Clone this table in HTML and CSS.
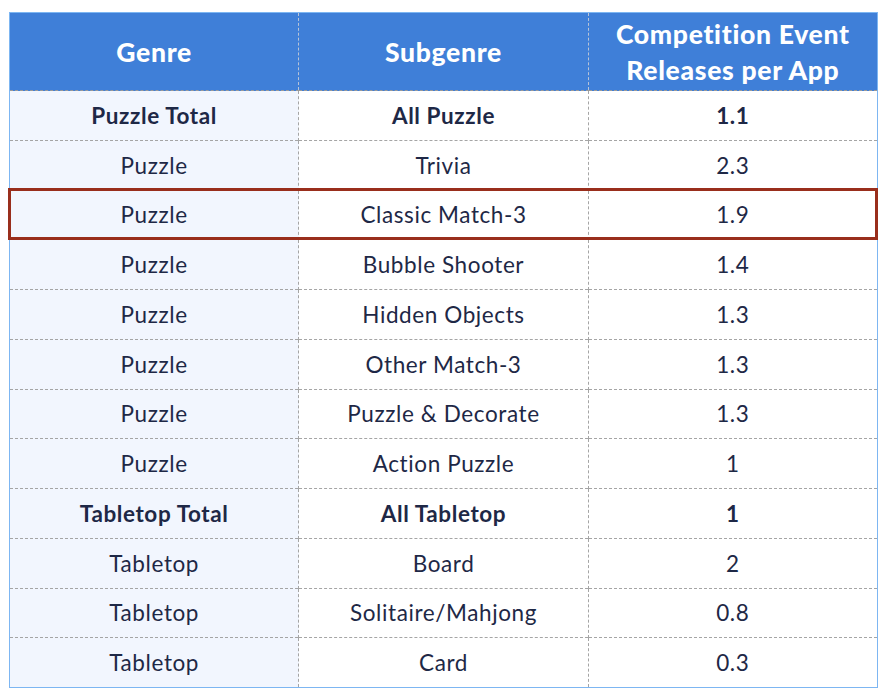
FILE: index.html
```html
<!DOCTYPE html>
<html>
<head>
<meta charset="utf-8">
<link rel="stylesheet" href="styles.css">
</head>
<body>
<div class="wrap">
  <table class="data">
    <thead>
      <tr>
        <th>Genre</th>
        <th>Subgenre</th>
        <th>Competition Event<br>Releases per App</th>
      </tr>
    </thead>
    <tbody>
      <tr class="total"><td>Puzzle Total</td><td>All Puzzle</td><td>1.1</td></tr>
      <tr><td>Puzzle</td><td>Trivia</td><td>2.3</td></tr>
      <tr><td>Puzzle</td><td>Classic Match-3</td><td>1.9</td></tr>
      <tr><td>Puzzle</td><td>Bubble Shooter</td><td>1.4</td></tr>
      <tr><td>Puzzle</td><td>Hidden Objects</td><td>1.3</td></tr>
      <tr><td>Puzzle</td><td>Other Match-3</td><td>1.3</td></tr>
      <tr><td>Puzzle</td><td>Puzzle &amp; Decorate</td><td>1.3</td></tr>
      <tr><td>Puzzle</td><td>Action Puzzle</td><td>1</td></tr>
      <tr class="total"><td>Tabletop Total</td><td>All Tabletop</td><td>1</td></tr>
      <tr><td>Tabletop</td><td>Board</td><td>2</td></tr>
      <tr><td>Tabletop</td><td>Solitaire/Mahjong</td><td>0.8</td></tr>
      <tr><td>Tabletop</td><td>Card</td><td>0.3</td></tr>
    </tbody>
  </table>
  <div class="highlight"></div>
</div>
</body>
</html>
```
FILE: styles.css
```css
html, body {
  margin: 0;
  padding: 0;
  background: #ffffff;
}
.wrap {
  position: relative;
  margin: 12px 0 0 9px;
  width: 869px;
}
.data {
  width: 869px;
  border-collapse: collapse;
  table-layout: fixed;
  border: 1px solid #7db6f2;
  font-family: "Lato", "Noto Sans", sans-serif;
  color: #1e2846;
}
.data th {
  background: #3f7fd8;
  color: #ffffff;
  font-weight: 900;
  font-size: 26.5px;
  letter-spacing: 0.7px;
  line-height: 36px;
  height: 77px;
  padding: 0;
  text-align: center;
  border-left: 1px dashed #b8c4d8;
  border-bottom: 1px dashed #9a9a9a;
}
.data th:first-child { border-left: none; }
.data td {
  height: 48.75px;
  padding: 0;
  text-align: center;
  font-size: 22.5px;
  letter-spacing: 0.6px;
  font-weight: 400;
  border-top: 1px dashed #a5a5a5;
  border-left: 1px dashed #a5a5a5;
}
.data td:first-child {
  background: #f2f6fe;
  border-left: 1px solid #7db6f2;
}
.data tr.total td { font-weight: 700; }
.highlight {
  position: absolute;
  left: -1px;
  top: 176px;
  width: 864px;
  height: 46px;
  border: 3px solid #992e1c;
  pointer-events: none;
}
```
